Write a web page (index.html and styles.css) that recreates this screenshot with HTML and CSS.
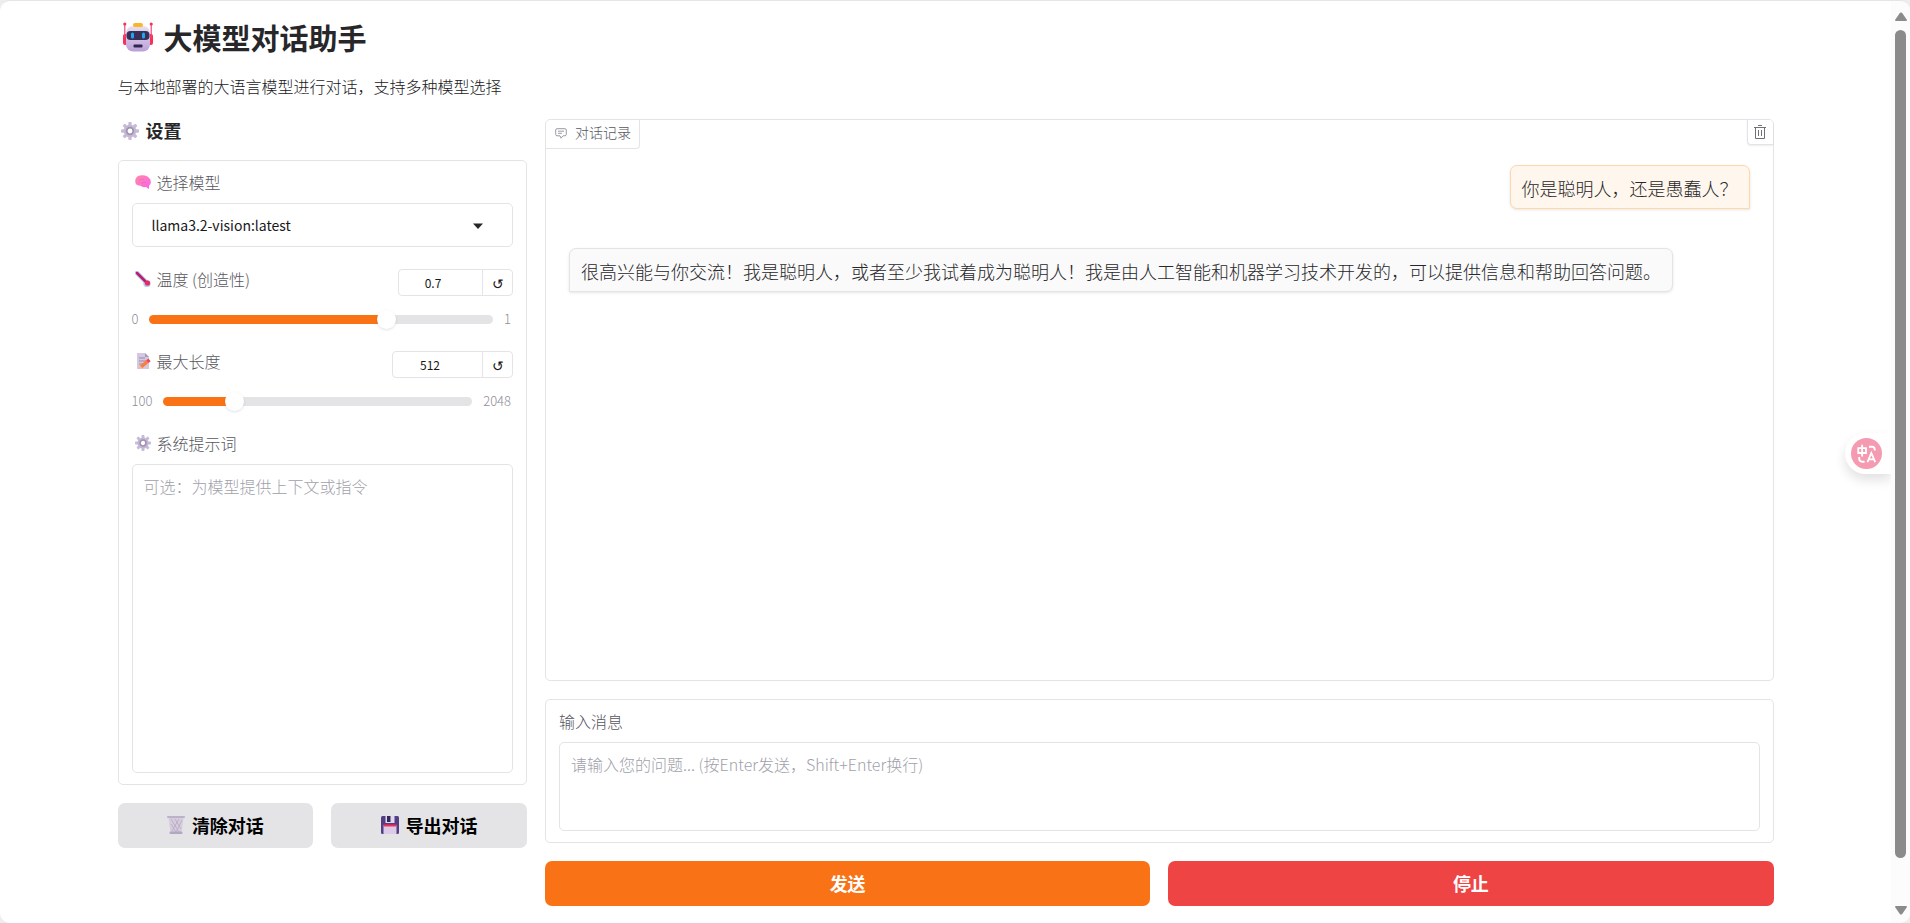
FILE: index.html
```html
<!DOCTYPE html>
<html lang="zh-CN">
<head>
    <meta charset="utf-8">
    <meta name="viewport" content="width=device-width, initial-scale=1.0">
    <title>大模型对话助手</title>
    <link rel="stylesheet" href="styles.css">
</head>
<body>
    <svg class="defs" aria-hidden="true">
        <defs>
            <linearGradient id="lilac" x1="0" y1="0" x2="0" y2="1">
                <stop offset="0" stop-color="#e9e0f0"/>
                <stop offset="1" stop-color="#b9a0d8"/>
            </linearGradient>
            <linearGradient id="pink" x1="0" y1="0" x2="1" y2="1">
                <stop offset="0" stop-color="#ff8aa8"/>
                <stop offset="1" stop-color="#fb62ea"/>
            </linearGradient>
        </defs>
        <symbol id="gear" viewBox="0 0 18 18">
            <g fill="#c6bbd8">
                <rect x="7.300" y="0" width="3.400" height="18" rx="1"/>
                <rect x="7.300" y="0" width="3.400" height="18" rx="1" transform="rotate(45 9 9)"/>
                <rect x="7.300" y="0" width="3.400" height="18" rx="1" transform="rotate(90 9 9)"/>
                <rect x="7.300" y="0" width="3.400" height="18" rx="1" transform="rotate(135 9 9)"/>
            </g>
            <circle cx="9" cy="9" r="6.300" fill="#c4b8d6"/>
            <circle cx="9" cy="9" r="3.300" fill="#fff" stroke="#a093b2" stroke-width="1.800"/>
        </symbol>
    </svg>

    <div class="window">
        <div class="page">
            <header class="head">
                <h1>
                    <svg class="robot" viewBox="0 0 30 30" aria-hidden="true">
                        <rect x="0" y="12" width="5" height="11" rx="2" fill="#f8315a"/>
                        <rect x="25" y="12" width="5" height="11" rx="2" fill="#f8315a"/>
                        <path d="M1.800 2v14M28.200 2v14" stroke="#f0457a" stroke-width="1.200"/>
                        <circle cx="1.800" cy="2" r="1.600" fill="#f8315a"/>
                        <circle cx="28.200" cy="2" r="1.600" fill="#f8315a"/>
                        <rect x="3" y="4" width="24" height="25.500" rx="7" fill="url(#lilac)"/>
                        <rect x="10" y="1" width="10" height="4" rx="2" fill="#fbb52b"/>
                        <rect x="3.500" y="9" width="23" height="9" rx="4" fill="#3a2f57"/>
                        <rect x="8" y="10.500" width="3" height="6" rx="1.500" fill="#22a5ef"/>
                        <rect x="19" y="10.500" width="3" height="6" rx="1.500" fill="#22a5ef"/>
                        <rect x="10.500" y="22.500" width="9" height="3" rx="1" fill="#33264d"/>
                    </svg>
                    大模型对话助手
                </h1>
                <p>与本地部署的大语言模型进行对话，支持多种模型选择</p>
            </header>

            <main class="columns">
                <section class="side">
                    <h3><svg class="gear-lg" aria-hidden="true"><use href="#gear"/></svg>设置</h3>

                    <div class="panel settings">
                        <div class="field">
                            <label class="label" for="model">
                                <svg class="emoji" viewBox="0 0 16 16" aria-hidden="true">
                                    <path d="M.5 9C-.5 5 2 2 5 1.600 9 .5 14 2 15.500 6c.8 3 0 4.500-1.500 5.500v3.500l-3-2C8 13.500 6 12.500 5 11.500c-2 0-4-.5-4.500-2.500z" fill="url(#pink)"/>
                                    <path d="M4 6c2-2 3 1 5-1M6 9c2 1 3-2 5 0" fill="none" stroke="#f060b4" stroke-width=".7"/>
                                </svg>
                                选择模型
                            </label>
                            <div class="select">
                                <select id="model">
                                    <option>llama3.2-vision:latest</option>
                                </select>
                                <svg class="caret" viewBox="0 0 10 6" aria-hidden="true"><path d="M0 .5h10L5 6z" fill="#27272a"/></svg>
                            </div>
                        </div>

                        <div class="field">
                            <div class="row">
                                <label class="label" for="temp">
                                    <svg class="emoji" viewBox="0 0 16 16" aria-hidden="true">
                                        <path d="M2 2l10.500 10.500" stroke="#a9cdf5" stroke-width="4.500" stroke-linecap="round"/>
                                        <circle cx="12" cy="12.500" r="3.600" fill="#a9cdf5"/>
                                        <path d="M2 2l10 10" stroke="#c01a6c" stroke-width="2.500" stroke-linecap="round"/>
                                        <circle cx="12.500" cy="12" r="2.600" fill="#f0285c"/>
                                    </svg>
                                    温度 (创造性)
                                </label>
                                <div class="number">
                                    <input class="narrow" type="number" value="0.7" step="0.1" aria-label="温度">
                                    <button type="button" aria-label="重置温度">↺</button>
                                </div>
                            </div>
                            <div class="slider">
                                <span>0</span>
                                <input id="temp" type="range" min="0" max="1" step="0.1" value="0.7" style="--fill: 70%">
                                <span>1</span>
                            </div>
                        </div>

                        <div class="field">
                            <div class="row">
                                <label class="label" for="length">
                                    <svg class="emoji" viewBox="0 0 16 16" aria-hidden="true">
                                        <path d="M2 0h8l4 4v12H2z" fill="#d3c8df"/>
                                        <path d="M10 0l4 4h-4z" fill="#a99bb8"/>
                                        <path d="M4 5h6M4 8h7M4 11h4" stroke="#9a8ba9"/>
                                        <path d="M6 14l7-6" stroke="#ff7d3c" stroke-width="3.500"/>
                                        <path d="M12.500 8.500l2-1.700" stroke="#f0405c" stroke-width="3.500"/>
                                        <path d="M3.500 16l1.300-3.500 2.400 2.600z" fill="#f3b98a"/>
                                    </svg>
                                    最大长度
                                </label>
                                <div class="number">
                                    <input type="number" value="512" aria-label="最大长度">
                                    <button type="button" aria-label="重置最大长度">↺</button>
                                </div>
                            </div>
                            <div class="slider">
                                <span>100</span>
                                <input id="length" type="range" min="100" max="2048" value="512" style="--fill: 21%">
                                <span>2048</span>
                            </div>
                        </div>

                        <div class="field">
                            <label class="label" for="system">
                                <svg class="emoji" aria-hidden="true"><use href="#gear"/></svg>
                                系统提示词
                            </label>
                            <textarea id="system" class="system" placeholder="可选：为模型提供上下文或指令"></textarea>
                        </div>
                    </div>

                    <div class="buttons">
                        <button class="btn" type="button">
                            <svg class="btn-icon" viewBox="0 0 18 18" aria-hidden="true">
                                <path d="M1.500 2h15l-2 14.500h-11z" fill="#d5cddd"/>
                                <path d="M4 3l8 13M8 3l6 10M12 3l-7 12M15 4l-6 12M4 8l5 8" stroke="#b1a6bc" stroke-width=".7"/>
                                <rect x="0" y="0" width="18" height="2" rx="1" fill="#bcb1c9"/>
                                <rect x="2.500" y="15.500" width="13" height="2.500" rx="1" fill="#b3a5c4"/>
                            </svg>
                            清除对话
                        </button>
                        <button class="btn" type="button">
                            <svg class="btn-icon" viewBox="0 0 18 18" aria-hidden="true">
                                <rect width="18" height="18" rx="1.500" fill="#533f83"/>
                                <path d="M4.500 0h9v7h-9z" fill="#e2d9ec"/>
                                <path d="M6 0h3.500v6H6z" fill="#35265c"/>
                                <path d="M2.500 9h13v9h-13z" fill="#dccbe8"/>
                                <path d="M2.500 8.500h13v2h-13z" fill="#f4304f"/>
                            </svg>
                            导出对话
                        </button>
                    </div>
                </section>

                <section class="main">
                    <div class="panel chat">
                        <div class="chat-label">
                            <svg viewBox="0 0 12 11" aria-hidden="true">
                                <path d="M2 .7h8c.8 0 1.300.5 1.300 1.300v4.500c0 .8-.5 1.300-1.300 1.300H8L6 10.200 5 7.800H2C1.200 7.800.7 7.300.7 6.500V2C.7 1.200 1.200.7 2 .7zM3 3.200h6M3 5.300h4" fill="none" stroke="#9b9ba3"/>
                            </svg>
                            对话记录
                        </div>
                        <button class="trash" type="button" aria-label="清空">
                            <svg viewBox="0 0 12 14" aria-hidden="true">
                                <path d="M4 .5h4M0 2.500h12M1.500 2.500v11h9v-11M4.500 5v6M7.500 5v6" fill="none" stroke="#71717a"/>
                            </svg>
                        </button>
                        <div class="bubble user">你是聪明人，还是愚蠢人？</div>
                        <div class="bubble bot">很高兴能与你交流！我是聪明人，或者至少我试着成为聪明人！我是由人工智能和机器学习技术开发的，可以提供信息和帮助回答问题。</div>
                    </div>

                    <div class="panel">
                        <div class="field">
                            <label class="label" for="message">输入消息</label>
                            <textarea id="message" class="message" placeholder="请输入您的问题... (按Enter发送，Shift+Enter换行)"></textarea>
                        </div>
                    </div>

                    <div class="buttons">
                        <button class="btn send" type="button">发送</button>
                        <button class="btn stop" type="button">停止</button>
                    </div>
                </section>
            </main>
        </div>

        <div class="scrollbar" aria-hidden="true">
            <svg viewBox="0 0 12 9"><path d="M5 .8Q6 0 7 .8L12 8q0 1-1 1H1Q0 9 0 8z" fill="#8b8b8b"/></svg>
            <div class="thumb"></div>
            <svg viewBox="0 0 12 9"><path d="M5 8.200Q6 9 7 8.200L12 1q0-1-1-1H1Q0 0 0 1z" fill="#8b8b8b"/></svg>
        </div>
    </div>

    <button class="translate" type="button" aria-label="翻译">
        <svg viewBox="0 0 32 32" aria-hidden="true">
            <circle cx="16" cy="16" r="16" fill="#f49ab1"/>
            <g fill="none" stroke="#fff" stroke-width="1.900">
                <path d="M7.500 10.500h8v5h-8zM11.500 7v12M18.500 9h3.500q2.500 0 2.500 3v1M8.500 19.500v2q0 3 3 3H14"/>
                <path d="M17 25l4-9.500 4 9.500M18.500 22h5"/>
            </g>
        </svg>
    </button>
</body>
</html>
```
FILE: styles.css
```css
* {
    box-sizing: border-box;
}
body {
    margin: 0;
    background: #ededed;
    color: #18181b;
    font-family: "Noto Sans CJK SC", sans-serif;
    font-size: 16px;
    font-weight: 300;
    line-height: 24px;
}
button, input, select, textarea {
    font: inherit;
    color: inherit;
    margin: 0;
}
button {
    cursor: pointer;
}
svg {
    display: block;
    flex: none;
}
.defs {
    position: absolute;
    width: 0;
    height: 0;
}
.window {
    display: flex;
    min-height: 100vh;
    border-top: 1px solid #e5e5e5;
    border-radius: 10px;
    background: #fff;
    overflow: hidden;
}
.page {
    flex: 1;
    min-width: 0;
    max-width: 1692px;
    margin: 0 auto;
    padding: 18px 18px 16px;
}

/* header */
.head {
    margin-bottom: 21px;
}
h1, h3, p {
    margin: 0;
}
h1 {
    display: flex;
    align-items: center;
    gap: 11px;
    margin-bottom: 19px;
    padding-left: 5px;
    color: #27272a;
    font-size: 29px;
    font-weight: 700;
    line-height: 36px;
}
.robot {
    width: 30px;
    height: 30px;
}
h3 {
    display: flex;
    align-items: center;
    gap: 7px;
    padding-left: 3px;
    color: #27272a;
    font-size: 18px;
    font-weight: 700;
    line-height: 23px;
}
.gear-lg {
    width: 18px;
    height: 18px;
}

/* columns */
.columns {
    display: flex;
    align-items: flex-start;
    gap: 18px;
}
.side, .main {
    display: flex;
    flex-direction: column;
    gap: 18px;
    min-width: 0;
}
.side {
    flex: 1;
}
.main {
    flex: 3;
}
.panel {
    padding: 11px 13px;
    border: 1px solid #e4e4e7;
    border-radius: 5px;
    background: #fff;
}
.settings {
    display: flex;
    flex-direction: column;
    gap: 22px;
}

/* form parts */
.label {
    display: flex;
    align-items: center;
    gap: 6px;
    color: #56565e;
    line-height: 20px;
}
.emoji {
    width: 16px;
    height: 16px;
    margin-left: 3px;
}
.field > .label {
    margin-bottom: 11px;
}
.select {
    position: relative;
}
.select select {
    display: block;
    width: 100%;
    height: 44px;
    padding: 0 19px;
    border: 1px solid #e4e4e7;
    border-radius: 5px;
    background: #fff;
    appearance: none;
    font-size: 14px;
    font-weight: 400;
}
.caret {
    position: absolute;
    top: 20px;
    right: 30px;
    width: 10px;
    height: 6px;
    pointer-events: none;
}
.row {
    display: flex;
    justify-content: space-between;
    align-items: flex-start;
    margin-bottom: 13px;
}
.number {
    display: flex;
    height: 27px;
    border: 1px solid #e4e4e7;
    border-radius: 4px;
    font-size: 12px;
    font-weight: 400;
}
.number input {
    width: 89px;
    padding: 0;
    border: 0;
    background: none;
    text-align: center;
}
.number .narrow {
    width: 83px;
}
.number button {
    width: 30px;
    padding: 0;
    border: 0;
    border-left: 1px solid #e4e4e7;
    background: none;
    font-size: 14px;
    line-height: 20px;
}
.slider {
    display: flex;
    align-items: center;
    gap: 11px;
    height: 20px;
    padding-right: 2px;
    color: #8e8e97;
    font-size: 13px;
}
.slider input {
    flex: 1;
    min-width: 0;
    height: 9px;
    border-radius: 5px;
    background: linear-gradient(to right, #f97316 var(--fill), #e4e4e7 var(--fill));
    appearance: none;
}
.slider input::-webkit-slider-thumb {
    width: 19px;
    height: 19px;
    border-radius: 50%;
    background: #fff;
    box-shadow: 0 1px 3px rgba(0,0,0,0.12);
    appearance: none;
}
textarea {
    display: block;
    width: 100%;
    padding: 9px 11px;
    border: 1px solid #e4e4e7;
    border-radius: 5px;
    background: #fff;
    resize: none;
}
textarea::placeholder {
    color: #a1a1aa;
}
.system {
    height: 309px;
}
.message {
    height: 89px;
}

/* buttons */
.buttons {
    display: flex;
    gap: 18px;
}
.btn {
    display: flex;
    flex: 1;
    justify-content: center;
    align-items: center;
    gap: 7px;
    height: 45px;
    padding: 0 0 2px;
    border: 0;
    border-radius: 7px;
    background: #e4e4e7;
    color: #000;
    font-size: 18px;
    font-weight: 700;
}
.btn-icon {
    width: 18px;
    height: 18px;
}
.send {
    background: #f97316;
    color: #fff;
}
.stop {
    background: #ef4444;
    color: #fff;
}

/* chat */
.chat {
    display: flex;
    flex-direction: column;
    align-items: flex-start;
    gap: 39px;
    position: relative;
    min-height: 562px;
    padding: 45px 23px;
}
.chat-label {
    display: flex;
    align-items: center;
    gap: 8px;
    position: absolute;
    top: 0;
    left: 0;
    height: 29px;
    padding: 0 8px 5px 9px;
    border: solid #e4e4e7;
    border-width: 0 1px 1px 0;
    border-radius: 4px 0 4px 0;
    color: #56565e;
    font-size: 14px;
}
.chat-label svg {
    width: 12px;
    height: 11px;
    margin-top: 3px;
}
.trash {
    display: flex;
    justify-content: center;
    align-items: center;
    position: absolute;
    top: 0;
    right: 0;
    width: 26px;
    height: 25px;
    padding: 0;
    border: solid #e4e4e7;
    border-width: 0 0 1px 1px;
    border-radius: 0 4px 0 4px;
    background: #fff;
    box-shadow: 0 1px 2px rgba(0,0,0,0.08);
}
.trash svg {
    width: 12px;
    height: 14px;
}
.bubble {
    padding: 10px 11px 8px;
    border: 1px solid #e4e4e7;
    border-radius: 7px;
    background: #fafafa;
    box-shadow: 0 1px 3px rgba(0,0,0,0.1);
    color: #27272a;
    font-size: 18px;
}
.user {
    align-self: flex-end;
    border-color: #fed7aa;
    border-bottom-right-radius: 0;
    background: #fff7ed;
}
.bot {
    border-bottom-left-radius: 0;
}

/* window edge */
.scrollbar {
    display: flex;
    flex-direction: column;
    align-items: center;
    width: 19px;
    padding: 11px 0 8px;
    background: #fcfcfc;
}
.scrollbar svg {
    width: 12px;
    height: 9px;
}
.thumb {
    flex: 1;
    width: 11px;
    margin: 9px 0 48px;
    border-radius: 6px;
    background: #8b8b8b;
}
.translate {
    position: fixed;
    top: 433px;
    right: 19px;
    width: 46px;
    height: 41px;
    padding: 5px 6px;
    border: 0;
    border-radius: 21px 0 0 21px;
    background: #fff;
    box-shadow: 0 6px 12px rgba(0,0,0,0.12);
    clip-path: inset(-20px 0 -30px -20px);
}
.translate svg {
    width: 31px;
    height: 31px;
}
```
